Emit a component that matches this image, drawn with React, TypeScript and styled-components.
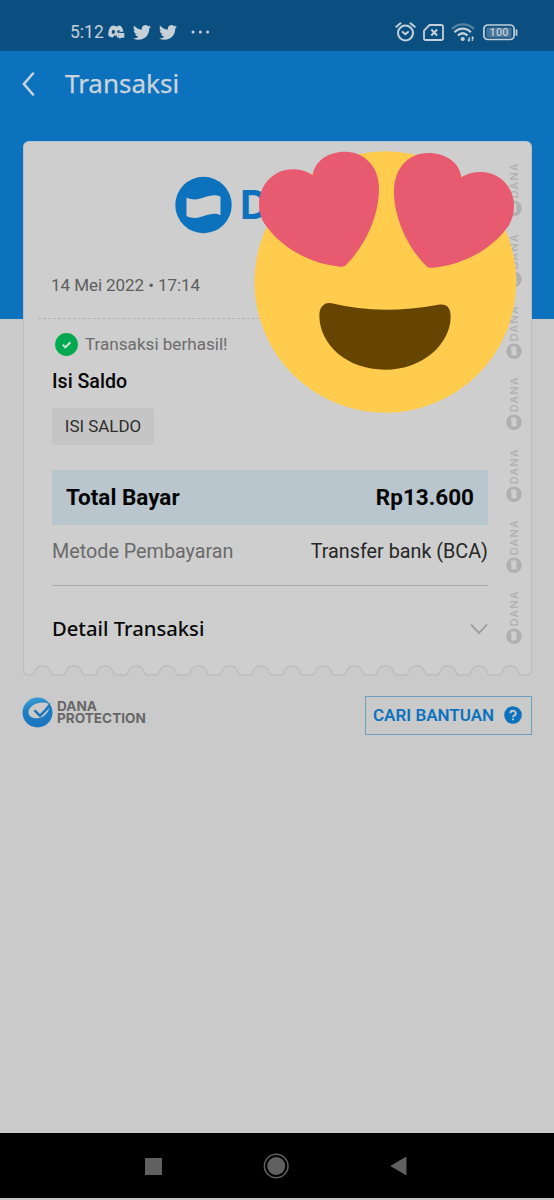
import React from 'react';
import styled, { createGlobalStyle } from 'styled-components';

const blue = '#0d72bd';
const page = '#cacaca';
const paper = '#cecece';
const edge = '#bdbdbd';

const Global = createGlobalStyle`
  * { box-sizing: border-box; }
  body { margin: 0; background: ${page}; font-family: Roboto, sans-serif; }
  svg { display: block; flex: none; }
`;

const Screen = styled.div`
  position: relative;
  width: 554px;
  height: 1200px;
  display: flex;
  flex-direction: column;
  overflow: hidden;
  background: linear-gradient(${blue} 0 319px, ${page} 319px);
`;

const StatusBar = styled.div`
  height: 51px;
  flex: none;
  display: flex;
  align-items: center;
  justify-content: space-between;
  padding: 13px 36px 0 70px;
  background: #0a4f80;
  color: #c5d0d8;
`;

const StatusGroup = styled.div<{ $gap: number }>`
  display: flex;
  align-items: center;
  gap: ${p => p.$gap}px;
`;

const Clock = styled.span`
  font-size: 17.5px;
  line-height: 20px;
  width: 34px;
  margin-right: -4px;
  white-space: nowrap;
`;

const DotsIcon = styled.svg`
  margin-left: 6px;
`;

const BatteryIcon = styled.svg`
  margin-left: 1px;
`;

const Header = styled.header`
  height: 90px;
  flex: none;
  display: flex;
  align-items: flex-start;
  padding: 14px 0 0 22px;
  gap: 29px;
`;

const Title = styled.h1`
  margin: 0;
  font: 400 26px/36px 'Noto Sans', sans-serif;
  color: #cbd4da;
  -webkit-text-stroke: 0.25px #cbd4da;
`;

const BackIcon = styled.svg`
  margin-top: 7px;
`;

const Receipt = styled.main`
  margin: 0 22px 0 23px;
  height: 536px;
  flex: none;
  display: flex;
  flex-direction: column;
`;

const Paper = styled.div`
  flex: 1;
  min-height: 0;
  display: flex;
  background: ${paper};
  border: 1px solid ${edge};
  border-bottom: 0;
  border-top-color: #a9c6da;
  border-radius: 6px 6px 0 0;
`;

const Content = styled.div`
  width: 450px;
  display: flex;
  flex-direction: column;
  padding-left: 14px;
`;

const Watermarks = styled.div`
  width: 18px;
  height: 500px;
  display: flex;
  flex-direction: column;
  padding-top: 20px;
  margin-left: auto;
  margin-right: 8px;
`;

const Brand = styled.div`
  height: 58px;
  flex: none;
  margin-top: 34px;
  padding-left: 137px;
  display: flex;
  align-items: center;
  gap: 8px;
`;

const BrandName = styled.span`
  font: 700 40px/58px Inter, sans-serif;
  color: ${blue};
`;

const DateLine = styled.div`
  height: 85px;
  flex: none;
  padding: 39px 0 0 13px;
  border-bottom: 1px dashed #b4b4b4;
  font-size: 17px;
  line-height: 24px;
  letter-spacing: -0.06px;
  color: #5d5d5d;
`;

const Section = styled.section`
  flex: none;
  padding-left: 14px;
  display: flex;
  flex-direction: column;
`;

const Success = styled.div`
  display: flex;
  align-items: center;
  gap: 7px;
  height: 24px;
  margin: 13px 0 0 3px;
  font-size: 17.1px;
  color: #6c6c6c;
`;

const Name = styled.h2`
  margin: 14px 0 0;
  font-size: 19.6px;
  font-weight: 500;
  line-height: 24px;
  color: #050505;
`;

const Tag = styled.span`
  align-self: flex-start;
  width: 102px;
  height: 37px;
  margin-top: 14px;
  background: #c5c5c5;
  border-radius: 2px;
  font-size: 16.9px;
  line-height: 36px;
  text-align: center;
  color: #2d2d2d;
`;

const Row = styled.div`
  display: flex;
  align-items: center;
  justify-content: space-between;
  width: 436px;
`;

const Total = styled(Row)`
  height: 55px;
  margin-top: 25px;
  padding: 0 14px 1px;
  background: #bac6ce;
  font-size: 22.5px;
  font-weight: 700;
  color: #050505;
`;

const Method = styled(Row)`
  height: 61px;
  padding-bottom: 7px;
  border-bottom: 1px solid #acacac;
  font-size: 19.75px;
  color: #262626;
`;

const Muted = styled.span`
  color: #6a6a6a;
`;

const Detail = styled(Row)`
  height: 83px;
  font: 500 20.2px/28px 'Noto Sans', sans-serif;
  color: #080808;
`;

const ChevronIcon = styled.svg`
  margin-top: 3px;
`;

const Footer = styled.footer`
  display: flex;
  justify-content: space-between;
  padding: 19px 22px 0;
  flex: 1;
  align-items: flex-start;
`;

const Protection = styled.div`
  display: flex;
  align-items: center;
  gap: 4px;
  height: 32px;
  color: #676767;
`;

const ProtectionName = styled.span`
  font: 700 13.6px/12px Inter, sans-serif;
`;

const Help = styled.button`
  display: flex;
  align-items: center;
  justify-content: space-between;
  width: 167px;
  height: 39px;
  padding: 0 9px 1px 7px;
  border: 1px solid #6e9dbe;
  background: transparent;
  color: ${blue};
  font: 600 17px/20px Roboto, sans-serif;
`;

const NavBar = styled.nav`
  height: 67px;
  flex: none;
  display: flex;
  justify-content: space-between;
  align-items: center;
  padding: 1px 147px 0 145px;
  background: #000;
  border-bottom: 2px solid #c6c6c6;
`;

const Emoji = styled.svg`
  position: absolute;
  left: 250px;
  top: 130px;
`;

const Discord = () => (
  <svg width="17" height="14" viewBox="0 0 17 14">
    <path fill="currentColor" fillRule="evenodd" d="M4.500.8 6.200.3l.6 1h3.400l.6-1 2 .6c1.500 1.700 2.400 3.700 2.500 5.900h-5v5.800H9l-.3-2H6.300l-1.600 1.900C2.600 12.300 1.200 11.600.3 10.500 0 6.800 1.200 3.200 3 1.300ZM5.700 5a1.600 1.900 0 1 0 .1 3.700A1.600 1.900 0 0 0 5.700 5Zm4.600 0-1.200 1.200.3 1.800 1-.7h1.500C12 5.800 11.400 5 10.300 5Z" />
    <path fill="currentColor" d="M10.300 8h6v4.700h-3l-1.800 1.300v-1.300h-1.200Z" />
  </svg>
);

const Twitter = () => (
  <svg width="18" height="15" viewBox="0 2 24 20">
    <path fill="currentColor" d="M24 4.560a10 10 0 0 1-2.830.780 4.900 4.900 0 0 0 2.160-2.720 9.900 9.900 0 0 1-3.120 1.190 4.920 4.920 0 0 0-8.390 4.480A14 14 0 0 1 1.670 3.150a4.930 4.930 0 0 0 1.520 6.570 4.900 4.900 0 0 1-2.230-.610c-.050 2.280 1.580 4.410 3.950 4.890a4.900 4.900 0 0 1-2.220.080 4.930 4.930 0 0 0 4.600 3.420A9.900 9.900 0 0 1 0 19.540a14 14 0 0 0 7.550 2.210c9.140 0 14.310-7.720 14-14.640A10 10 0 0 0 24 4.560Z" />
  </svg>
);

const Dots = () => (
  <DotsIcon width="20" height="4" viewBox="0 0 20 4" fill="currentColor">
    <circle cx="2" cy="2" r="1.500" /><circle cx="9.300" cy="2" r="1.500" /><circle cx="16.600" cy="2" r="1.500" />
  </DotsIcon>
);

const Alarm = () => (
  <svg width="21" height="20" viewBox="0 0 21 20" fill="none" stroke="currentColor" strokeWidth="2" strokeLinecap="round" strokeLinejoin="round">
    <circle cx="10.500" cy="11" r="7.500" />
    <path d="m7.700 10 2.700 2.300L13 10M1.300 4.800 5.500 1.300M19.700 4.800l-4.200-3.500" />
  </svg>
);

const Sim = () => (
  <svg width="21" height="17" viewBox="0 0 21 17" fill="none" stroke="currentColor" strokeWidth="1.800" strokeLinejoin="round">
    <path d="M6.500 1h11.700q1.800 0 1.800 1.800v11.400q0 1.800-1.800 1.800H2.800Q1 16 1 14.200V6.600Z" />
    <path d="m8.300 5.500 5.800 6M14.100 5.500l-5.800 6" strokeWidth="2" />
  </svg>
);

const Wifi = () => (
  <svg width="24" height="19" viewBox="0 0 24 19" fill="none" stroke="currentColor" strokeWidth="2.300">
    <path opacity=".4" d="M1 6C7-.2 17-.2 23 6" />
    <path d="M3.500 9.200C8.300 4.300 15.100 4.300 19.900 9.200M6.900 12.500c3-2.800 6.600-2.800 9.600 0" />
    <circle cx="11.700" cy="16" r="2.100" fill="currentColor" stroke="none" />
    <path d="M18.300 14v4.500M21.300 13.500V18M16.800 16.500l1.500 1.800M21.300 13.700l1.500 2" strokeWidth="1.200" />
  </svg>
);

const Battery = () => (
  <BatteryIcon width="35" height="17" viewBox="0 0 35 17">
    <rect x="3.500" y="3.500" width="25" height="10" rx="1" fill="#47749a" />
    <rect x=".9" y="1" width="30.200" height="14.500" rx="4" fill="none" stroke="currentColor" strokeWidth="1.700" />
    <path d="M33.500 6v5" stroke="currentColor" strokeWidth="1.700" strokeLinecap="round" />
    <text x="16" y="12.300" textAnchor="middle" fontFamily="Roboto" fontWeight="500" fontSize="10.800" textLength="19" fill="currentColor">100</text>
  </BatteryIcon>
);

const Mark = () => (
  <svg width="18" height="71.400" viewBox="0 0 18 71.400">
    <text transform="translate(12.900 36.300) rotate(-90)" fontFamily="Inter" fontSize="10.800" fontWeight="500" textLength="35" fill="#b0b0b0">DANA</text>
    <circle cx="9" cy="46.200" r="7.800" fill="#b0b0b0" />
    <path d="M5.700 41.700q3.200-1.100 6 .2-1 2.500.2 8-3.100 1.300-5.700.2.900-3-.5-8.400Z" fill={paper} />
  </svg>
);

const arcs = Array.from({ length: 16 }, (_, i) => 19.700 + i * 31.170);
const tearLine = 'M.5 0V5Q.5 10 5.500 10' + arcs
  .map(c => `H${c - 10.500}Q${c - 9} 10 ${c - 8} 6.500C${c - 5} -1.200 ${c + 5} -1.200 ${c + 8} 6.500Q${c + 9} 10 ${c + 10.500} 10`)
  .join('') + 'H503.500Q508.500 10 508.500 5V0';

const TornEdge = () => (
  <svg width="509" height="12" viewBox="0 0 509 12">
    <path d={tearLine} fill={paper} />
    <path d={tearLine} fill="none" stroke={edge} strokeWidth="1.400" />
  </svg>
);

export default function App() {
  return (
    <Screen>
      <Global />
      <StatusBar>
        <StatusGroup $gap={8}>
          <Clock>5:12</Clock>
          <Discord />
          <Twitter />
          <Twitter />
          <Dots />
        </StatusGroup>
        <StatusGroup $gap={7}>
          <Alarm />
          <Sim />
          <Wifi />
          <Battery />
        </StatusGroup>
      </StatusBar>
      <Header>
        <BackIcon width="14" height="24" viewBox="0 0 14 24" fill="none" stroke="#cbd4da" strokeWidth="2.500" strokeLinecap="round">
          <path d="M11 1.500 1.900 12 11 22.500" />
        </BackIcon>
        <Title>Transaksi</Title>
      </Header>
      <Receipt>
        <Paper>
          <Content>
            <Brand>
              <svg width="57" height="58" viewBox="0 0 57 58">
                <circle cx="28.500" cy="29" r="28.200" fill={blue} />
                <path d="M11.500 21.500C25 28 33 15.500 45.500 20.500V39C33 34 25 46.500 11.500 40Z" fill={paper} />
              </svg>
              <BrandName>DANA</BrandName>
            </Brand>
            <DateLine>14 Mei 2022 • 17:14</DateLine>
            <Section>
              <Success>
                <svg width="23" height="23" viewBox="0 0 23 23">
                  <circle cx="11.500" cy="11.500" r="11.400" fill="#00a94f" />
                  <path d="m7.700 11.800 2.700 2.500 5-5" fill="none" stroke="#cfe0d5" strokeWidth="2" />
                </svg>
                Transaksi berhasil!
              </Success>
              <Name>Isi Saldo</Name>
              <Tag>ISI SALDO</Tag>
              <Total><span>Total Bayar</span><span>Rp13.600</span></Total>
              <Method><Muted>Metode Pembayaran</Muted><span>Transfer bank (BCA)</span></Method>
              <Detail>
                Detail Transaksi
                <ChevronIcon width="18" height="12" viewBox="0 0 18 12" fill="none" stroke="#999" strokeWidth="1.800">
                  <path d="m1 1.500 8 8.500 8-8.500" />
                </ChevronIcon>
              </Detail>
            </Section>
          </Content>
          <Watermarks>
            {[0, 1, 2, 3, 4, 5, 6].map(i => <Mark key={i} />)}
          </Watermarks>
        </Paper>
        <TornEdge />
      </Receipt>
      <Footer>
        <Protection>
          <svg width="31" height="31" viewBox="0 0 31 31">
            <defs>
              <linearGradient id="orb" x1="0" y1="0" x2="0.300" y2="1">
                <stop offset="0" stopColor="#43a4d6" />
                <stop offset=".5" stopColor="#1c7dc4" />
                <stop offset="1" stopColor="#1977c0" />
              </linearGradient>
            </defs>
            <circle cx="15.500" cy="15.500" r="15" fill="url(#orb)" />
            <path d="M26.500 7C20 3 6.500 7.500 6.500 15.500C7 23.500 23 24.500 27.500 11L18 20.500Z" fill={page} />
            <path d="m11.500 14 2-1.500 4.500 4.500L30 4.800 18 20.500Z" fill="#1c73b8" />
          </svg>
          <ProtectionName>DANA<br />PROTECTION</ProtectionName>
        </Protection>
        <Help>
          CARI BANTUAN
          <svg width="18" height="18" viewBox="0 0 18 18">
            <circle cx="9" cy="9" r="8.800" fill={blue} />
            <path d="M6.300 7.200a2.700 2.500 0 1 1 3.700 2.400Q9 10 9 11.200M9 12.600v1.700" fill="none" stroke={page} strokeWidth="1.900" />
          </svg>
        </Help>
      </Footer>
      <NavBar>
        <svg width="17" height="17" viewBox="0 0 17 17"><rect width="17" height="17" fill="#606060" /></svg>
        <svg width="26" height="26" viewBox="-.7 0 26 26">
          <circle cx="12.500" cy="13" r="11.800" fill="none" stroke="#606060" strokeWidth="1.500" />
          <circle cx="12.500" cy="13" r="9" fill="#606060" />
        </svg>
        <svg width="17" height="20" viewBox="0 0 17 20"><path d="M.3 10 15.500 1q1 0 1 1v16q0 1-1 1Z" fill="#606060" /></svg>
      </NavBar>
      <Emoji width="304" height="300" viewBox="0 0 912 900">
        <circle cx="406" cy="456" r="392.500" fill="#ffcc4d" />
        <path fill="#e75a70" d="M188 136C194 92 235 65 285 65C345 65 387 112 387 175C387 260 345 348 288 405Q283 411 272 410C180 402 92 352 44 282C33 266 27 245 27 224C27 164 72 118 127 118C150 118 172 124 188 136Z" />
        <path fill="#e75a70" d="M634 142C650 131 671 126 692 126C748 126 792 170 792 228C792 250 786 270 776 287C727 357 640 405 548 413Q537 415 530 409C475 355 432 265 432 185C432 115 475 69 535 69C588 69 630 99 634 142Z" />
        <path fill="#664500" d="M245 520C224 515 208 530 208 556C208 644 290 719 405 719C520 719 602 640 602 560C602 530 588 520 565 524C450 545 345 545 245 520Z" />
      </Emoji>
    </Screen>
  );
}
